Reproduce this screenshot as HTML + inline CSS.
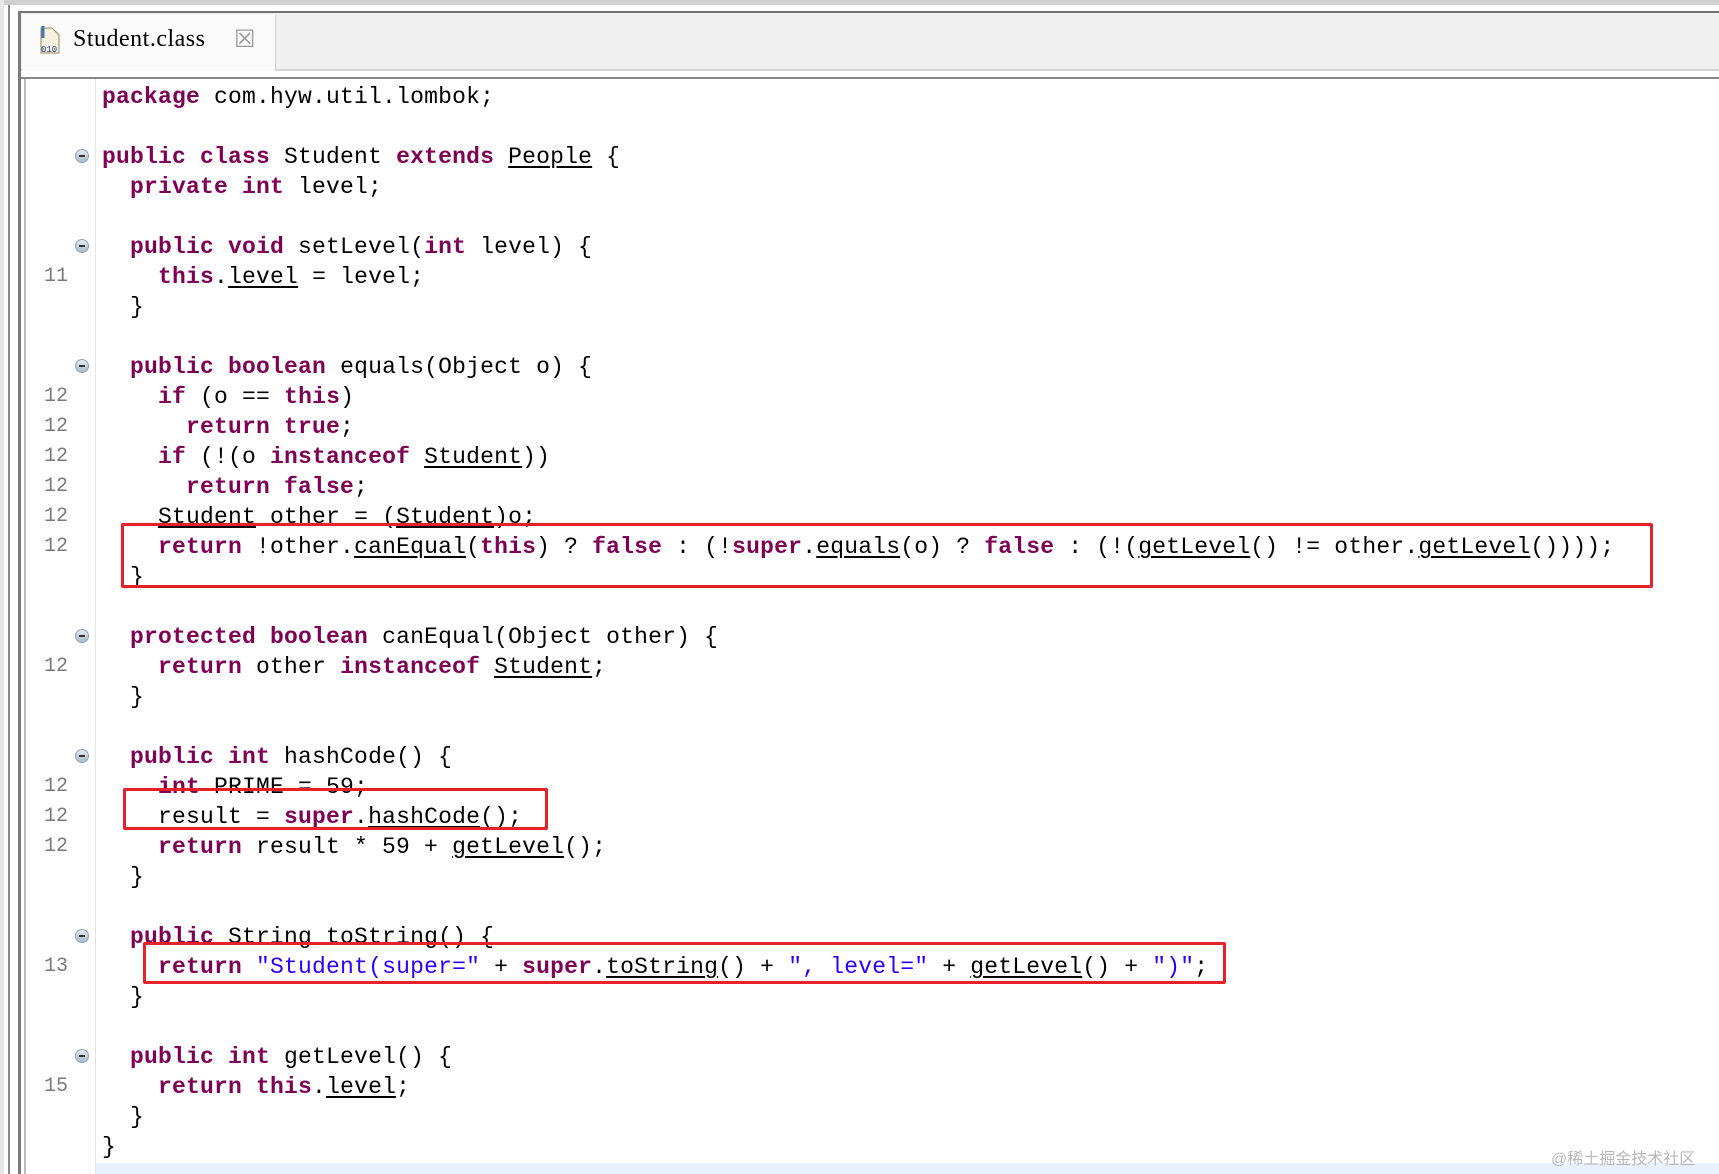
<!DOCTYPE html>
<html><head><meta charset="utf-8">
<style>
html,body{margin:0;padding:0}
body{width:1719px;height:1174px;position:relative;overflow:hidden;background:#fff;font-family:"Liberation Mono",monospace}
.abs{position:absolute}
.ln{position:absolute;left:102px;height:30px;line-height:30px;font-size:23px;letter-spacing:0.2px;white-space:pre;color:#000;margin-top:2px}
.k{color:#7f0055;font-weight:bold}
.s{color:#2a00ff}
.u{text-decoration:underline;text-underline-offset:3px}
.num{position:absolute;left:44px;width:26px;height:30px;line-height:30px;font-size:20px;color:#7a7a7a;text-align:left;margin-top:2px}
.fold{position:absolute;left:75px;width:14px;height:14px;border-radius:50%;background:linear-gradient(#e4ecf4,#a9bbcc);border:1px solid #8ea3b8;box-sizing:border-box}
.fold:after{content:"";position:absolute;left:3px;top:5px;width:6px;height:2px;background:#333}
.box{position:absolute;border:3px solid #e8202a;box-sizing:border-box;border-radius:2px}
</style></head><body>
<div class="abs" style="left:0;top:0;width:1719px;height:5px;background:#cfcfcf"></div>
<div class="abs" style="left:0;top:0;width:4px;height:1174px;background:#e6e6e6"></div>
<div class="abs" style="left:8px;top:5px;width:2px;height:1169px;background:#8a8a8a"></div>
<div class="abs" style="left:18px;top:11px;width:3px;height:1163px;background:#7a7a7a"></div>
<div class="abs" style="left:21px;top:11px;width:1698px;height:2px;background:#707070"></div>
<div class="abs" style="left:21px;top:13px;width:1698px;height:57px;background:#f0f0f0"></div>
<div class="abs" style="left:21px;top:69px;width:1698px;height:2px;background:#d6d6d6"></div>
<div class="abs" style="left:22px;top:15px;width:253px;height:56px;background:#fafafa;border-right:1px solid #d0d0d0"></div>
<div class="abs" style="left:21px;top:77px;width:1698px;height:2px;background:#888"></div>
<div class="abs" style="left:24px;top:79px;width:2px;height:1095px;background:#bcbcbc"></div>
<div class="abs" style="left:95px;top:79px;width:1px;height:1095px;background:#e4e4e4"></div>
<svg class="abs" style="left:36px;top:24px" width="30" height="32" viewBox="0 0 30 32">
<path d="M5 4h11l7 7v18H5z" fill="#f7f2df" stroke="#9a8a55"/>
<path d="M7 2v12" stroke="#4a72b8" stroke-width="3"/>
<text x="5" y="28" font-size="9" font-family="Liberation Mono" fill="#1a3a8a">010</text>
</svg>
<div class="abs" style="left:73px;top:26px;font-family:'Liberation Serif',serif;font-size:24px;letter-spacing:0.5px;color:#000">Student.class</div>
<div class="abs" style="left:234px;top:25px;font-size:24px;color:#999;font-family:'DejaVu Sans',sans-serif">☒</div>

<div class="abs" style="left:96px;top:1163px;width:1623px;height:11px;background:#e8f2fe"></div>

<div class="ln" style="top:80px"><span class="k">package</span> com.hyw.util.lombok;</div>
<div class="ln" style="top:140px"><span class="k">public class</span> Student <span class="k">extends</span> <span class="u">People</span> {</div>
<div class="ln" style="top:170px">  <span class="k">private int</span> level;</div>
<div class="ln" style="top:230px">  <span class="k">public void</span> setLevel(<span class="k">int</span> level) {</div>
<div class="ln" style="top:260px">    <span class="k">this</span>.<span class="u">level</span> = level;</div>
<div class="ln" style="top:290px">  }</div>
<div class="ln" style="top:350px">  <span class="k">public boolean</span> equals(Object o) {</div>
<div class="ln" style="top:380px">    <span class="k">if</span> (o == <span class="k">this</span>)</div>
<div class="ln" style="top:410px">      <span class="k">return true</span>;</div>
<div class="ln" style="top:440px">    <span class="k">if</span> (!(o <span class="k">instanceof</span> <span class="u">Student</span>))</div>
<div class="ln" style="top:470px">      <span class="k">return false</span>;</div>
<div class="ln" style="top:500px">    <span class="u">Student</span> other = (<span class="u">Student</span>)o;</div>
<div class="ln" style="top:530px">    <span class="k">return</span> !other.<span class="u">canEqual</span>(<span class="k">this</span>) ? <span class="k">false</span> : (!<span class="k">super</span>.<span class="u">equals</span>(o) ? <span class="k">false</span> : (!(<span class="u">getLevel</span>() != other.<span class="u">getLevel</span>())));</div>
<div class="ln" style="top:560px">  }</div>
<div class="ln" style="top:620px">  <span class="k">protected boolean</span> canEqual(Object other) {</div>
<div class="ln" style="top:650px">    <span class="k">return</span> other <span class="k">instanceof</span> <span class="u">Student</span>;</div>
<div class="ln" style="top:680px">  }</div>
<div class="ln" style="top:740px">  <span class="k">public int</span> hashCode() {</div>
<div class="ln" style="top:770px">    <span class="k">int</span> PRIME = 59;</div>
<div class="ln" style="top:800px">    result = <span class="k">super</span>.<span class="u">hashCode</span>();</div>
<div class="ln" style="top:830px">    <span class="k">return</span> result * 59 + <span class="u">getLevel</span>();</div>
<div class="ln" style="top:860px">  }</div>
<div class="ln" style="top:920px">  <span class="k">public</span> String toString() {</div>
<div class="ln" style="top:950px">    <span class="k">return</span> <span class="s">"Student(super="</span> + <span class="k">super</span>.<span class="u">toString</span>() + <span class="s">", level="</span> + <span class="u">getLevel</span>() + <span class="s">")"</span>;</div>
<div class="ln" style="top:980px">  }</div>
<div class="ln" style="top:1040px">  <span class="k">public int</span> getLevel() {</div>
<div class="ln" style="top:1070px">    <span class="k">return this</span>.<span class="u">level</span>;</div>
<div class="ln" style="top:1100px">  }</div>
<div class="ln" style="top:1130px">}</div>

<div class="num" style="top:260px">11</div>
<div class="num" style="top:380px">12</div>
<div class="num" style="top:410px">12</div>
<div class="num" style="top:440px">12</div>
<div class="num" style="top:470px">12</div>
<div class="num" style="top:500px">12</div>
<div class="num" style="top:530px">12</div>
<div class="num" style="top:650px">12</div>
<div class="num" style="top:770px">12</div>
<div class="num" style="top:800px">12</div>
<div class="num" style="top:830px">12</div>
<div class="num" style="top:950px">13</div>
<div class="num" style="top:1070px">15</div>

<div class="fold" style="top:149px"></div>
<div class="fold" style="top:239px"></div>
<div class="fold" style="top:359px"></div>
<div class="fold" style="top:629px"></div>
<div class="fold" style="top:749px"></div>
<div class="fold" style="top:929px"></div>
<div class="fold" style="top:1049px"></div>

<div class="box" style="left:121px;top:523px;width:1532px;height:65px"></div>
<div class="box" style="left:123px;top:788px;width:425px;height:42px"></div>
<div class="box" style="left:143px;top:942px;width:1083px;height:42px"></div>

<div class="abs" style="left:1551px;top:1145px;font-family:'Liberation Sans','Noto Sans CJK SC',sans-serif;font-size:16px;color:#b8b8b8">@稀土掘金技术社区</div>
</body></html>
